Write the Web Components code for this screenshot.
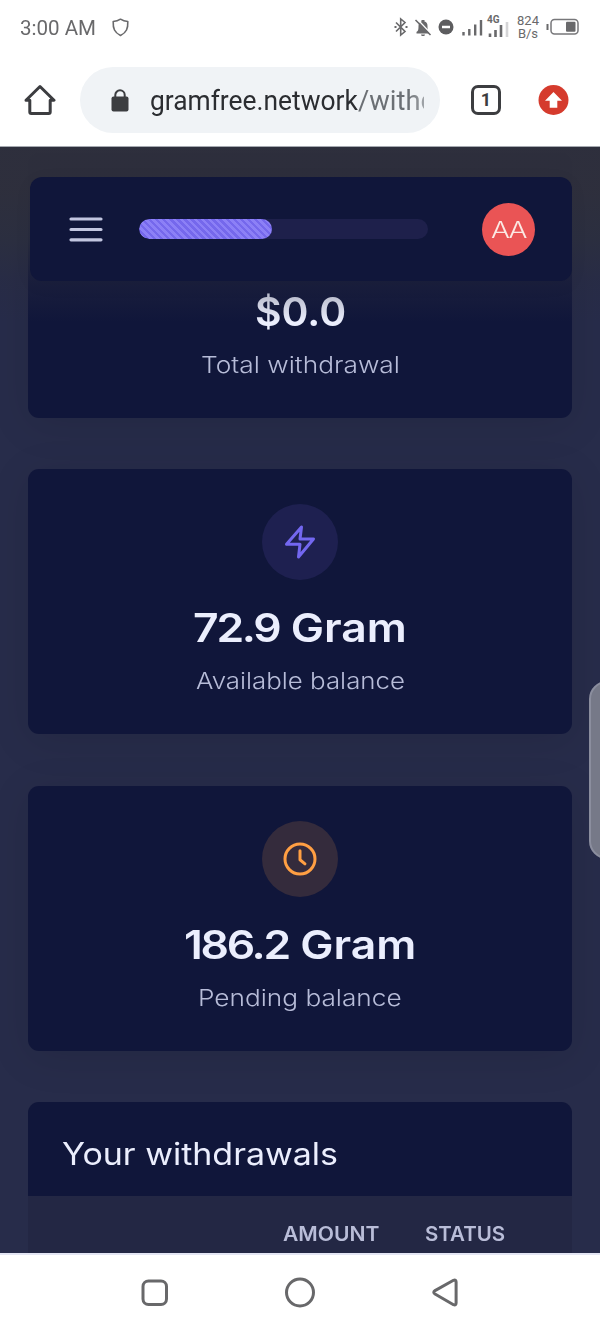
<!DOCTYPE html>
<html lang="en">
<head>
    <meta charset="UTF-8">
    <meta name="viewport" content="width=device-width, initial-scale=1.0">
    <title>Withdrawals</title>
    <style>
        body {
            margin: 0;
            width: 600px;
            height: 1333px;
            overflow: hidden;
            display: flex;
            flex-direction: column;
            background: #fff;
            font-family: Inter, "Liberation Sans", sans-serif;
        }
        .num {letter-spacing: -2px;}
    </style>
</head>
<body>
    <template id="tpl-status">
        <style>
            :host {display: flex; align-items: center; height: 54px; padding: 0 21px 0 20px; box-sizing: border-box; color: #69696b; font-family: Roboto, sans-serif; flex: none;}
            svg {display: block; flex: none;}
            .time {font-size: 20px; line-height: 24px; padding-top: 1px;}
            .shield {margin-left: 16px;}
            .right {display: flex; align-items: center; margin-left: auto;}
            .speed {font-size: 13px; line-height: 13px; text-align: center; width: 24px; margin: 0 6px 0 7px;}
            .sim {display: flex; flex-direction: column; width: 22px; height: 22px; margin: -3px 0 0 4px;}
            .sim b {font-size: 10px; line-height: 10px; height: 7px;}
        </style>
        <fit-text class="time" width="76">3:00 AM</fit-text>
        <svg class="shield" width="17" height="19" viewBox="0 0 17 19" fill="none" stroke="#69696b" stroke-width="1.6" stroke-linejoin="round"><path d="M8.5 1.2C6 2.8 4 3.3 1.2 3.5c-.3 7 1.3 11 7.3 14 6-3 7.600-7 7.300-14C13 3.300 11 2.800 8.500 1.200z"/></svg>
        <div class="right">
            <svg width="14" height="20" viewBox="0 0 14 20" fill="none" stroke="#69696b" stroke-width="1.600"><path d="M2 5.500l9 9L6.700 18V2L11 5.500 2 14.500"/><path d="M.5 10h2M11.500 10h2" stroke-width="2"/></svg>
            <svg style="margin-left:6px" width="18" height="19" viewBox="0 0 18 19"><path fill="#69696b" d="M2.500 14c1.500-1 2-2 2-6 0-2.500 1.200-4 3-4.500V2h3v1.500c2 .5 3 2 3 4.500 0 4 .5 5 2 6v1.500h-13zM7 16.500h4c0 2-4 2-4 0z"/><path stroke="#fff" stroke-width="1.300" d="M3.200 1l14 15"/><path stroke="#69696b" stroke-width="1.600" d="M1.500 2l15 15"/></svg>
            <svg style="margin-left:6px" width="16" height="16" viewBox="0 0 16 16"><circle cx="8" cy="8" r="7.500" fill="#5d5d5f"/><path d="M4 8h8" stroke="#fff" stroke-width="2.500"/></svg>
            <svg style="margin-left:8px" width="21" height="17" viewBox="0 0 21 17" stroke="#69696b" stroke-width="2.400"><path d="M1.500 13v3.500M7.300 10v6.500M13.200 5.500v11M19 1v15.500"/></svg>
            <div class="sim">
                <b>4G</b>
                <svg width="22" height="15" viewBox="0 0 22 15" stroke="#69696b" stroke-width="2.600"><path d="M3 11.500v3.500M8.500 8v7M14 3v12"/><path stroke="#d5d5d7" d="M20 0v15"/></svg>
            </div>
            <div class="speed">824<br>B/s</div>
            <svg width="33" height="18" viewBox="0 0 33 18" fill="none"><path d="M1.500 6v6" stroke="#69696b" stroke-width="2"/><rect x="5" y="1.500" width="27" height="14.500" rx="3.500" stroke="#77777a" stroke-width="1.500"/><rect x="20" y="3.800" width="9.500" height="10" rx="1" fill="#69696b"/></svg>
        </div>
    </template>

    <template id="tpl-toolbar">
        <style>
            :host {display: flex; align-items: flex-start; height: 93px; padding: 13px 0 0 24px; box-sizing: border-box; border-bottom: 1px solid #a5a9b0; flex: none; font-family: Roboto, sans-serif;}
            svg {display: block; flex: none;}
            .pill {display: flex; align-items: center; width: 360px; height: 66px; margin-left: 24px; padding: 0 16px 0 31px; box-sizing: border-box; border-radius: 33px; background: #f0f3f6;}
            .url {flex: 1; display: flex; overflow: hidden; white-space: nowrap; margin-left: 21px; font-size: 27px; line-height: 40px; color: #2b2d31; padding-top: 2px; -webkit-mask-image: linear-gradient(90deg, #000 94%, rgba(0,0,0,.6)); mask-image: linear-gradient(90deg, #000 94%, rgba(0,0,0,.6));}
            .path {color: #6b6f74;}
            .tabs {display: grid; place-items: center; width: 30px; height: 30px; margin: 18px 0 0 31px; box-sizing: border-box; border: 3px solid #3c3d40; border-radius: 7px; font-size: 18px; line-height: 20px; font-weight: 700; color: #3c3d40;}
        </style>
        <svg style="margin-top:16px" width="32" height="34" viewBox="0 0 32 34" fill="none" stroke="#3c3d40" stroke-width="3" stroke-linejoin="round"><path d="M2 17.200L16 3.500l14 13.700h-3.800V29q0 1.500-1.500 1.500H7.300Q5.800 30.500 5.800 29V17.200z"/></svg>
        <div class="pill">
            <svg width="18" height="23" viewBox="0 0 18 23"><path d="M4.300 9V6a4.700 4.700 0 0 1 9.400 0v3" fill="none" stroke="#3c3d40" stroke-width="2"/><rect x=".500" y="7.500" width="17" height="15" rx="2" fill="#3c3d40"/></svg>
            <div class="url"><fit-text width="208">gramfree.network</fit-text><fit-text class="path" width="78">/withd</fit-text></div>
        </div>
        <div class="tabs">1</div>
        <svg style="margin:18px 0 0 37px" width="31" height="31" viewBox="0 0 31 31"><circle cx="15.500" cy="15" r="15" fill="#d53b2d"/><path d="M15.500 7l8.500 8.700h-4.700V22.700h-7.600v-7H7z" fill="#fff"/></svg>
    </template>

    <template id="tpl-header">
        <style>
            :host {position: absolute; left: 0; top: 0; width: 600px; height: 175px; padding: 30px 28px 0 30px; box-sizing: border-box; background: linear-gradient(180deg, rgba(46,47,60,.96) 25%, rgba(44,47,62,.85) 52%, rgba(42,44,64,.4) 76%, rgba(42,44,64,0));}
            .bar {display: flex; align-items: center; height: 104px; padding: 0 37px 0 39px; box-sizing: border-box; border-radius: 12px; background: #10163a; box-shadow: 0 4px 20px rgba(0,0,0,.04);}
            .menu {width: 34px; height: 25px;}
            .track {width: 289px; height: 20px; margin-left: 36px; border-radius: 10px; background: #1e204b; overflow: hidden;}
            .fill {width: 46%; height: 100%; border-radius: 10px; background: repeating-linear-gradient(45deg, #7568ec 0 2.500px, #8c80f6 2.500px 5px);}
            .avatar {display: grid; place-items: center; width: 53px; height: 53px; margin-left: auto; border-radius: 50%; background: #ea5455; color: #fbe9e4; font-size: 22.500px; font-weight: 300; letter-spacing: -1.500px;}
        </style>
        <div class="bar">
            <svg class="menu" viewBox="0 0 34 25" stroke="#c2c6e0" stroke-width="3.200" stroke-linecap="round"><path d="M2 2h30M2 12.500h30M2 22.800h30"/></svg>
            <div class="track"><div class="fill"></div></div>
            <div class="avatar"><fit-text width="35">AA</fit-text></div>
        </div>
    </template>

    <template id="tpl-card">
        <style>
            :host {display: flex; flex-direction: column; align-items: center; height: 265px; padding-top: 35px; box-sizing: border-box; flex: none; border-radius: 11px; background: #10163a; box-shadow: 0 7px 42px rgba(0,0,0,.1);}
            .circle {display: grid; place-items: center; width: 76px; height: 76px; border-radius: 50%; background: var(--tint, #1e2050);}
            .value {height: 48px; margin-top: 24px; line-height: 48px; font-size: 39.500px; font-weight: 600; color: #ebeefd;}
            .label {height: 36px; margin-top: 11px; line-height: 36px; font-size: 23px; font-weight: 350; color: #b7bcd8;}
        </style>
        <div class="circle"><slot name="icon"></slot></div>
        <div class="value"><slot name="value"></slot></div>
        <div class="label"><slot></slot></div>
    </template>

    <template id="tpl-table">
        <style>
            :host {display: block; flex: none; border-radius: 11px; overflow: hidden; background: #232744;}
            .title {height: 94px; padding: 32px 35px 0 34px; box-sizing: border-box; line-height: 40px; font-size: 30.500px; color: #ebeefd; background: #10163a;}
            .head {display: grid; grid-template-columns: 255px 142px 1fr; padding-top: 24px; line-height: 28px; font-size: 20px; font-weight: 600; color: #b9bdd8; height: 70px;}
        </style>
        <div class="title"><slot name="title"></slot></div>
        <div class="head"><span></span><slot></slot></div>
    </template>

    <template id="tpl-page">
        <style>
            :host {display: block; position: relative; height: 1106px; overflow: hidden; flex: none; background: #272c4a;}
            .content {display: flex; flex-direction: column; gap: 51.500px; padding: 5.500px 28px 0;}
            .handle {position: absolute; left: 589px; top: 534px; width: 36px; height: 178px; box-sizing: border-box; border: 2px solid #8b8e9e; border-radius: 18px; background: #767988;}
        </style>
        <div class="content"><slot></slot></div>
        <slot name="header"></slot>
        <div class="handle"></div>
    </template>

    <template id="tpl-nav">
        <style>
            :host {display: flex; align-items: center; justify-content: center; gap: 115px; height: 80px; padding-bottom: 2px; box-sizing: border-box; border-top: 2px solid #e3e5f3; flex: none; background: #fff;}
            svg {display: block;}
        </style>
        <svg width="30" height="32" viewBox="0 0 30 32" fill="none" stroke="#68686a" stroke-width="3"><rect x="4" y="4" width="23.500" height="23.500" rx="5.500"/></svg>
        <svg width="32" height="32" viewBox="0 0 32 32" fill="none" stroke="#68686a" stroke-width="3"><circle cx="16" cy="15.500" r="13.500"/></svg>
        <svg width="30" height="32" viewBox="0 0 30 32" fill="none" stroke="#68686a" stroke-width="3" stroke-linejoin="round"><path d="M22.500 3.300L4 13.600q-2.500 1.700 0 3.400L22.500 27.700q2.600 1 2.600-1.700V5q0-2.700-2.600-1.700z"/></svg>
    </template>

    <status-bar></status-bar>
    <browser-toolbar></browser-toolbar>
    <page-view>
        <app-header slot="header"></app-header>
        <stat-card>
            <fit-text slot="value" width="91">$0.0</fit-text>
            <fit-text width="199">Total withdrawal</fit-text>
        </stat-card>
        <stat-card>
            <svg slot="icon" width="36" height="36" viewBox="0 0 24 24" fill="none" stroke="#7367f0" stroke-width="2" stroke-linecap="round" stroke-linejoin="round"><path d="M13 2L3 13.500h9L11 22l10-12h-9z"/></svg>
            <fit-text slot="value" width="214"><span class="num">72.9</span> Gram</fit-text>
            <fit-text width="209">Available balance</fit-text>
        </stat-card>
        <stat-card style="--tint: #342b3c">
            <svg slot="icon" width="36" height="36" viewBox="0 0 24 24" fill="none" stroke="#ff9f43" stroke-width="2" stroke-linecap="round" stroke-linejoin="round"><circle cx="12" cy="12" r="10"/><path d="M12 6.500v6l3.300 2.700"/></svg>
            <fit-text slot="value" width="232"><span class="num">186.2</span> Gram</fit-text>
            <fit-text width="204">Pending balance</fit-text>
        </stat-card>
        <withdrawals-table>
            <fit-text slot="title" width="276">Your withdrawals</fit-text>
            <fit-text width="96">AMOUNT</fit-text>
            <fit-text width="80">STATUS</fit-text>
        </withdrawals-table>
    </page-view>
    <nav-bar></nav-bar>

    <script>
        // Text stretched or narrowed to a given width
        customElements.define('fit-text', class extends HTMLElement {
            connectedCallback() {
                this.attachShadow({mode: 'open'}).innerHTML = `
                    <style>
                        :host {display: inline-block; flex: none; white-space: nowrap;}
                        .text {display: inline-block; transform-origin: 0 50%;}
                    </style>
                    <span class="text"><slot></slot></span>`;
                this.style.width = this.getAttribute('width') + 'px';
                requestAnimationFrame(() => this.fit());
            }
            fit() {
                const text = this.shadowRoot.querySelector('.text');
                const natural = text.offsetWidth;
                if (natural) text.style.transform = `scaleX(${this.getAttribute('width') / natural})`;
            }
        });

        function define(name, id) {
            customElements.define(name, class extends HTMLElement {
                connectedCallback() {
                    const tpl = document.querySelector(id);
                    this.attachShadow({mode: 'open'}).appendChild(tpl.content.cloneNode(true));
                }
            });
        }

        define('status-bar', '#tpl-status');
        define('browser-toolbar', '#tpl-toolbar');
        define('app-header', '#tpl-header');
        define('stat-card', '#tpl-card');
        define('withdrawals-table', '#tpl-table');
        define('page-view', '#tpl-page');
        define('nav-bar', '#tpl-nav');
    </script>
</body>
</html>
